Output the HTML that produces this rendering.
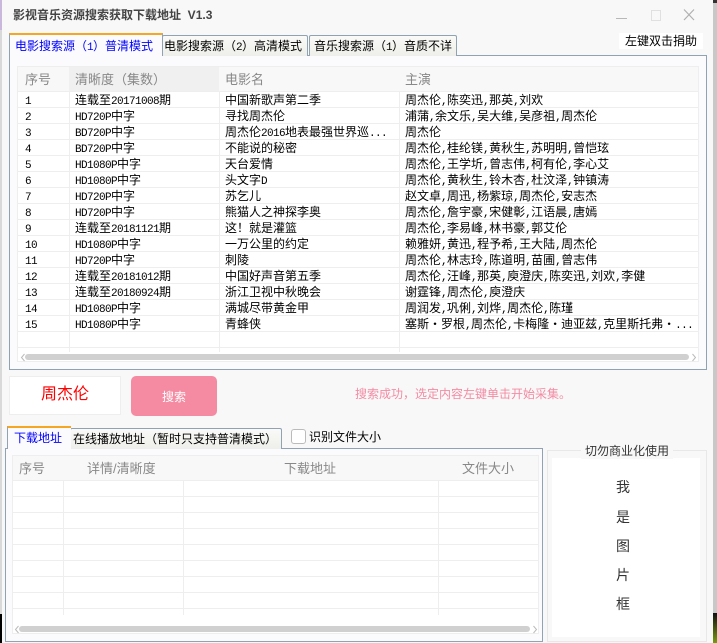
<!DOCTYPE html>
<html lang="zh"><head><meta charset="utf-8"><title>影视音乐资源搜索获取下载地址</title>
<style>
html,body{margin:0;padding:0;width:717px;height:643px;overflow:hidden;background:#f8f8f8}
body{position:relative;font:12px/16px "Liberation Sans","WenQuanYi Zen Hei","Noto Sans CJK SC",sans-serif;color:#000}
div,span.a{position:absolute;box-sizing:border-box}
.t{white-space:pre;height:16px;line-height:16px}
i{font:11px/16px "Liberation Mono",monospace;font-style:normal;letter-spacing:-.6px}
.h{color:#888;font-size:13px}
.hl{background:#eee;height:1px}
.vl{background:#eee;width:1px}
.tab{background:linear-gradient(#fafaf8,#eeeeea);border:1px solid #8fa3b3;border-bottom:0;border-radius:2px 2px 0 0;font-size:12px;line-height:20px;white-space:pre}
.sb{background:#d0d0d0;border-radius:3px;height:6px}
</style></head><body>
<div style="left:0;top:0;width:2px;height:643px;background:#d9d9d9"></div>
<div style="left:0;top:0;width:2px;height:30px;background:#c9b8dc"></div>
<div style="left:0;top:614px;width:2px;height:29px;background:#000"></div>
<div style="left:713px;top:0;width:4px;height:643px;background:#c8c8c8"></div>
<div style="left:713px;top:0;width:4px;height:3px;background:#333"></div>
<div style="left:713px;top:613px;width:4px;height:30px;background:linear-gradient(#111,#7a9a10)"></div>

<div class="t" style="left:13px;top:7px;font-weight:bold;color:#444">影视音乐资源搜索获取下载地址<span style="font:bold 12px/16px 'Liberation Sans',sans-serif">  V1.3</span></div>

<svg style="position:absolute;left:610px;top:5px" width="90" height="20"><path d="M6 13.5H17" stroke="#b8b8b8" fill="none"/><rect x="41.5" y="5.5" width="9" height="10" fill="none" stroke="#e0e0e0"/><path d="M74 4.5L84 15M84 4.5L74 15" stroke="#b0b0b0" fill="none" stroke-width="1.2"/></svg>

<div style="left:619px;top:33px;width:84px;height:16px;background:#fff"></div>
<div class="t" style="left:625px;top:33px">左键双击捐助</div>

<!-- top panel -->
<div style="left:9px;top:55px;width:698px;height:315px;background:#fbfbfd;border:1px solid #8fa3b3"></div>
<div class="tab" style="left:162px;top:35px;width:146px;height:21px;padding-left:1px">电影搜索源（<i>2</i>）高清模式</div>
<div class="tab" style="left:309px;top:35px;width:148px;height:21px;padding-left:4px">音乐搜索源（<i>1</i>）音质不详</div>
<div style="left:9px;top:33px;width:154px;height:23px;background:#fbfbfd;border:1px solid #8fa3b3;border-top:2px solid #f5a623;border-bottom:0;color:#00f;font-size:12px;line-height:22px;padding-left:5px;white-space:pre">电影搜索源（<i>1</i>）普清模式</div>

<!-- list 1 -->
<div style="left:17px;top:66px;width:682px;height:296px;background:#fff;border:1px solid #eee"></div>
<div style="left:18px;top:67px;width:680px;height:24px;background:#f8f8f8"></div>
<div style="left:69px;top:67px;width:150px;height:24px;background:#f0f0f0"></div>
<div class="t h" style="left:25px;top:72px">序号</div>
<div class="t h" style="left:75px;top:72px">清晰度（集数）</div>
<div class="t h" style="left:225px;top:72px">电影名</div>
<div class="t h" style="left:405px;top:72px">主演</div>

<div class="vl" style="left:69px;top:91px;height:261px"></div>
<div class="vl" style="left:219px;top:91px;height:261px"></div>
<div class="vl" style="left:399px;top:91px;height:261px"></div>
<div class="hl" style="left:18px;top:91px;width:680px"></div>
<div class="hl" style="left:18px;top:107px;width:680px"></div>
<div class="hl" style="left:18px;top:123px;width:680px"></div>
<div class="hl" style="left:18px;top:139px;width:680px"></div>
<div class="hl" style="left:18px;top:155px;width:680px"></div>
<div class="hl" style="left:18px;top:171px;width:680px"></div>
<div class="hl" style="left:18px;top:187px;width:680px"></div>
<div class="hl" style="left:18px;top:203px;width:680px"></div>
<div class="hl" style="left:18px;top:219px;width:680px"></div>
<div class="hl" style="left:18px;top:235px;width:680px"></div>
<div class="hl" style="left:18px;top:251px;width:680px"></div>
<div class="hl" style="left:18px;top:267px;width:680px"></div>
<div class="hl" style="left:18px;top:283px;width:680px"></div>
<div class="hl" style="left:18px;top:299px;width:680px"></div>
<div class="hl" style="left:18px;top:315px;width:680px"></div>
<div class="hl" style="left:18px;top:331px;width:680px"></div>
<div class="hl" style="left:18px;top:347px;width:680px"></div>

<div class="t" style="left:25px;top:92px"><i>1</i></div><div class="t" style="left:75px;top:92px">连载至<i>20171008</i>期</div><div class="t" style="left:225px;top:92px">中国新歌声第二季</div><div class="t" style="left:405px;top:92px">周杰伦<i>,</i>陈奕迅<i>,</i>那英<i>,</i>刘欢</div>
<div class="t" style="left:25px;top:108px"><i>2</i></div><div class="t" style="left:75px;top:108px"><i>HD720P</i>中字</div><div class="t" style="left:225px;top:108px">寻找周杰伦</div><div class="t" style="left:405px;top:108px">浦蒲<i>,</i>余文乐<i>,</i>吴大维<i>,</i>吴彦祖<i>,</i>周杰伦</div>
<div class="t" style="left:25px;top:124px"><i>3</i></div><div class="t" style="left:75px;top:124px"><i>BD720P</i>中字</div><div class="t" style="left:225px;top:124px">周杰伦<i>2016</i>地表最强世界巡<i>...</i></div><div class="t" style="left:405px;top:124px">周杰伦</div>
<div class="t" style="left:25px;top:140px"><i>4</i></div><div class="t" style="left:75px;top:140px"><i>BD720P</i>中字</div><div class="t" style="left:225px;top:140px">不能说的秘密</div><div class="t" style="left:405px;top:140px">周杰伦<i>,</i>桂纶镁<i>,</i>黄秋生<i>,</i>苏明明<i>,</i>曾恺玹</div>
<div class="t" style="left:25px;top:156px"><i>5</i></div><div class="t" style="left:75px;top:156px"><i>HD1080P</i>中字</div><div class="t" style="left:225px;top:156px">天台爱情</div><div class="t" style="left:405px;top:156px">周杰伦<i>,</i>王学圻<i>,</i>曾志伟<i>,</i>柯有伦<i>,</i>李心艾</div>
<div class="t" style="left:25px;top:172px"><i>6</i></div><div class="t" style="left:75px;top:172px"><i>HD1080P</i>中字</div><div class="t" style="left:225px;top:172px">头文字<i>D</i></div><div class="t" style="left:405px;top:172px">周杰伦<i>,</i>黄秋生<i>,</i>铃木杏<i>,</i>杜汶泽<i>,</i>钟镇涛</div>
<div class="t" style="left:25px;top:188px"><i>7</i></div><div class="t" style="left:75px;top:188px"><i>HD720P</i>中字</div><div class="t" style="left:225px;top:188px">苏乞儿</div><div class="t" style="left:405px;top:188px">赵文卓<i>,</i>周迅<i>,</i>杨紫琼<i>,</i>周杰伦<i>,</i>安志杰</div>
<div class="t" style="left:25px;top:204px"><i>8</i></div><div class="t" style="left:75px;top:204px"><i>HD720P</i>中字</div><div class="t" style="left:225px;top:204px">熊猫人之神探李奥</div><div class="t" style="left:405px;top:204px">周杰伦<i>,</i>詹宇豪<i>,</i>宋健彰<i>,</i>江语晨<i>,</i>唐嫣</div>
<div class="t" style="left:25px;top:220px"><i>9</i></div><div class="t" style="left:75px;top:220px">连载至<i>20181121</i>期</div><div class="t" style="left:225px;top:220px">这！就是灌篮</div><div class="t" style="left:405px;top:220px">周杰伦<i>,</i>李易峰<i>,</i>林书豪<i>,</i>郭艾伦</div>
<div class="t" style="left:25px;top:236px"><i>10</i></div><div class="t" style="left:75px;top:236px"><i>HD1080P</i>中字</div><div class="t" style="left:225px;top:236px">一万公里的约定</div><div class="t" style="left:405px;top:236px">赖雅妍<i>,</i>黄迅<i>,</i>程予希<i>,</i>王大陆<i>,</i>周杰伦</div>
<div class="t" style="left:25px;top:252px"><i>11</i></div><div class="t" style="left:75px;top:252px"><i>HD720P</i>中字</div><div class="t" style="left:225px;top:252px">刺陵</div><div class="t" style="left:405px;top:252px">周杰伦<i>,</i>林志玲<i>,</i>陈道明<i>,</i>苗圃<i>,</i>曾志伟</div>
<div class="t" style="left:25px;top:268px"><i>12</i></div><div class="t" style="left:75px;top:268px">连载至<i>20181012</i>期</div><div class="t" style="left:225px;top:268px">中国好声音第五季</div><div class="t" style="left:405px;top:268px">周杰伦<i>,</i>汪峰<i>,</i>那英<i>,</i>庾澄庆<i>,</i>陈奕迅<i>,</i>刘欢<i>,</i>李健</div>
<div class="t" style="left:25px;top:284px"><i>13</i></div><div class="t" style="left:75px;top:284px">连载至<i>20180924</i>期</div><div class="t" style="left:225px;top:284px">浙江卫视中秋晚会</div><div class="t" style="left:405px;top:284px">谢霆锋<i>,</i>周杰伦<i>,</i>庾澄庆</div>
<div class="t" style="left:25px;top:300px"><i>14</i></div><div class="t" style="left:75px;top:300px"><i>HD1080P</i>中字</div><div class="t" style="left:225px;top:300px">满城尽带黄金甲</div><div class="t" style="left:405px;top:300px">周润发<i>,</i>巩俐<i>,</i>刘烨<i>,</i>周杰伦<i>,</i>陈瑾</div>
<div class="t" style="left:25px;top:316px"><i>15</i></div><div class="t" style="left:75px;top:316px"><i>HD1080P</i>中字</div><div class="t" style="left:225px;top:316px">青蜂侠</div><div class="t" style="left:405px;top:316px">塞斯・罗根<i>,</i>周杰伦<i>,</i>卡梅隆・迪亚兹<i>,</i>克里斯托弗・<i>...</i></div>

<div class="sb" style="left:25px;top:354px;width:664px"></div>
<svg style="position:absolute;left:20px;top:353px" width="6" height="9"><path d="M4.5 1L1.5 4.5L4.5 8" stroke="#bbb" fill="none"/></svg>
<svg style="position:absolute;left:691px;top:353px" width="6" height="9"><path d="M1.5 1L4.5 4.5L1.5 8" stroke="#bbb" fill="none"/></svg>

<!-- search row -->
<div style="left:9px;top:376px;width:112px;height:39px;background:#fff;border:1px solid #eee"></div>
<div style="left:41px;top:386px;font-size:16px;line-height:18px;color:#f00;white-space:pre">周杰伦</div>
<div style="left:131px;top:376px;width:86px;height:40px;background:#f48ba3;border-radius:5px"></div>
<div class="t" style="left:162px;top:389px;color:#fff">搜索</div>
<div class="t" style="left:355px;top:386px;color:#f48ba3">搜索成功，选定内容左键单击开始采集。</div>

<!-- bottom panel -->
<div style="left:5px;top:448px;width:538px;height:194px;background:#fbfbfd;border:1px solid #8fa3b3"></div>
<div class="tab" style="left:70px;top:428px;width:212px;height:21px;font-size:12px;padding-left:2px">在线播放地址（暂时只支持普清模式）</div>
<div style="left:7px;top:426px;width:64px;height:23px;background:#fbfbfd;border:1px solid #8fa3b3;border-top:2px solid #f5a623;border-bottom:0;border-right:0;color:#00f;line-height:20px;padding-left:6px;white-space:pre">下载地址</div>
<div style="left:291px;top:429px;width:15px;height:15px;background:#fff;border:1px solid #bbb;border-radius:3px"></div>
<div class="t" style="left:309px;top:429px">识别文件大小</div>

<div style="left:12px;top:455px;width:527px;height:179px;background:#fff;border:1px solid #eee"></div>
<div style="left:13px;top:456px;width:525px;height:24px;background:#f8f8f8"></div>
<div class="t h" style="left:19px;top:461px">序号</div>
<div class="t h" style="left:87px;top:461px">详情/清晰度</div>
<div class="t h" style="left:284px;top:461px">下载地址</div>
<div class="t h" style="left:462px;top:461px">文件大小</div>
<div class="vl" style="left:63px;top:480px;height:135px"></div>
<div class="vl" style="left:183px;top:480px;height:135px"></div>
<div class="vl" style="left:438px;top:480px;height:135px"></div>
<div class="hl" style="left:13px;top:480px;width:525px"></div>
<div class="hl" style="left:13px;top:496px;width:525px"></div>
<div class="hl" style="left:13px;top:512px;width:525px"></div>
<div class="hl" style="left:13px;top:528px;width:525px"></div>
<div class="hl" style="left:13px;top:544px;width:525px"></div>
<div class="hl" style="left:13px;top:560px;width:525px"></div>
<div class="hl" style="left:13px;top:576px;width:525px"></div>
<div class="hl" style="left:13px;top:592px;width:525px"></div>
<div class="hl" style="left:13px;top:608px;width:525px"></div>
<div class="sb" style="left:19px;top:626px;width:511px"></div>
<svg style="position:absolute;left:14px;top:625px" width="6" height="9"><path d="M4.5 1L1.5 4.5L4.5 8" stroke="#bbb" fill="none"/></svg>
<svg style="position:absolute;left:532px;top:625px" width="6" height="9"><path d="M1.5 1L4.5 4.5L1.5 8" stroke="#bbb" fill="none"/></svg>

<!-- right group -->
<div style="left:547px;top:450px;width:160px;height:192px;border:1px solid #e8e8e8"></div>
<div style="left:552px;top:458px;width:148px;height:179px;background:#fff"></div>
<div class="t" style="left:581px;top:443px;padding:0 4px;background:#f8f8f8;color:#333">切勿商业化使用</div>
<div class="t" style="left:616px;top:479px;font-size:14px;color:#333">我</div>
<div class="t" style="left:616px;top:509px;font-size:14px;color:#333">是</div>
<div class="t" style="left:616px;top:538px;font-size:14px;color:#333">图</div>
<div class="t" style="left:616px;top:567px;font-size:14px;color:#333">片</div>
<div class="t" style="left:616px;top:596px;font-size:14px;color:#333">框</div>
</body></html>
